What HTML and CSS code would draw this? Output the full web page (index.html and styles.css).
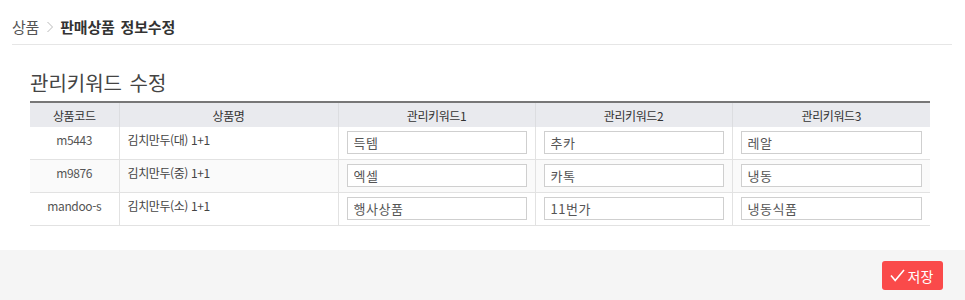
FILE: index.html
```html
<!DOCTYPE html>
<html lang="ko">
<head>
    <meta charset="UTF-8">
    <title>판매상품 정보수정</title>
    <link rel="stylesheet" href="styles.css">
</head>
<body>
    <div class="page-head">
        <div class="breadcrumb">
            <span class="crumb">상품</span>
            <svg class="sep" width="8" height="12" viewBox="0 0 8 12"><path d="M1.5 1 L6.5 6 L1.5 11" fill="none" stroke="#bbb" stroke-width="1"/></svg>
            <span class="crumb current">판매상품 정보수정</span>
        </div>
    </div>
    <div class="content">
        <h2 class="section-title">관리키워드 수정</h2>
        <table class="kw-table">
            <colgroup>
                <col style="width: 89px">
                <col style="width: 219px">
                <col style="width: 197px">
                <col style="width: 197px">
                <col>
            </colgroup>
            <thead>
                <tr>
                    <th>상품코드</th>
                    <th>상품명</th>
                    <th>관리키워드1</th>
                    <th>관리키워드2</th>
                    <th>관리키워드3</th>
                </tr>
            </thead>
            <tbody>
                <tr>
                    <td class="code">m5443</td>
                    <td class="name">김치만두(대) 1+1</td>
                    <td><input class="kw-input" type="text" value="득템"></td>
                    <td><input class="kw-input" type="text" value="추카"></td>
                    <td><input class="kw-input" type="text" value="레알"></td>
                </tr>
                <tr class="alt">
                    <td class="code">m9876</td>
                    <td class="name">김치만두(중) 1+1</td>
                    <td><input class="kw-input" type="text" value="엑셀"></td>
                    <td><input class="kw-input" type="text" value="카톡"></td>
                    <td><input class="kw-input" type="text" value="냉동"></td>
                </tr>
                <tr>
                    <td class="code">mandoo-s</td>
                    <td class="name">김치만두(소) 1+1</td>
                    <td><input class="kw-input" type="text" value="행사상품"></td>
                    <td><input class="kw-input" type="text" value="11번가"></td>
                    <td><input class="kw-input" type="text" value="냉동식품"></td>
                </tr>
            </tbody>
        </table>
    </div>
    <div class="footer-bar">
        <button class="save-button" type="button">
            <svg class="check" width="15" height="13" viewBox="0 0 15 13"><path d="M1 6.5 L5.2 11.5 L14 1" fill="none" stroke="#fff" stroke-width="1.6"/></svg>
            저장
        </button>
    </div>
</body>
</html>
```

FILE: styles.css
```css
body {
    margin: 0;
    padding: 0;
    font-family: "Noto Sans CJK KR", "Noto Sans", sans-serif;
    color: #555;
    background: #fff;
}
.page-head {
    padding: 0 13px 0 12px;
}
.breadcrumb {
    height: 45px;
    border-bottom: 1px solid #e6e6e6;
    display: flex;
    align-items: center;
    gap: 6px;
    font-size: 15px;
    letter-spacing: -0.2px;
    padding: 9px 0 0 0;
    box-sizing: border-box;
}
.crumb {
    color: #555;
}
.crumb.current {
    color: #333;
    font-weight: bold;
    word-spacing: 2px;
}
.sep {
    margin: 1px 0 0 1px;
}
.content {
    padding: 25px 35px 24px 30px;
}
.section-title {
    margin: 0 0 5px 0;
    font-size: 20px;
    font-weight: normal;
    color: #444;
    word-spacing: 2px;
    line-height: 26px;
}
.kw-table {
    width: 900px;
    border-collapse: collapse;
    table-layout: fixed;
    border-top: 2px solid #777;
    font-size: 12px;
    letter-spacing: -0.4px;
}
.kw-table th {
    background: #e9eaee;
    color: #333;
    font-weight: normal;
    height: 24px;
    padding: 0;
    border-left: 1px solid #dcdde0;
}
.kw-table th:first-child,
.kw-table td:first-child {
    border-left: none;
}
.kw-table td {
    border-left: 1px solid #e2e2e2;
    border-bottom: 1px solid #e2e2e2;
    padding: 4px 8px 4px 8px;
    vertical-align: top;
    height: 24px;
}
.kw-table tr.alt td {
    background: #fafafa;
}
.kw-table td.code {
    text-align: center;
    line-height: 20px;
    padding-top: 3px;
    color: #555;
}
.kw-table td.name {
    line-height: 20px;
    padding-top: 3px;
    color: #444;
}
.kw-input {
    display: block;
    width: 100%;
    height: 23px;
    box-sizing: border-box;
    border: 1px solid #cfcfcf;
    background: #fff;
    padding: 0 6px;
    font-family: inherit;
    font-size: 13px;
    color: #555;
    letter-spacing: 0.5px;
    outline: none;
}
.footer-bar {
    background: #f5f5f5;
    height: 51px;
    display: flex;
    justify-content: flex-end;
    align-items: flex-start;
    padding: 11px 22px 0 0;
    box-sizing: border-box;
}
.save-button {
    display: flex;
    align-items: center;
    gap: 3px;
    height: 29px;
    width: 61px;
    justify-content: center;
    border: none;
    border-radius: 3px;
    background: #fa4a4a;
    color: #fff;
    font-family: inherit;
    font-size: 14px;
    padding: 0 6px 0 4px;
    cursor: pointer;
}
```
